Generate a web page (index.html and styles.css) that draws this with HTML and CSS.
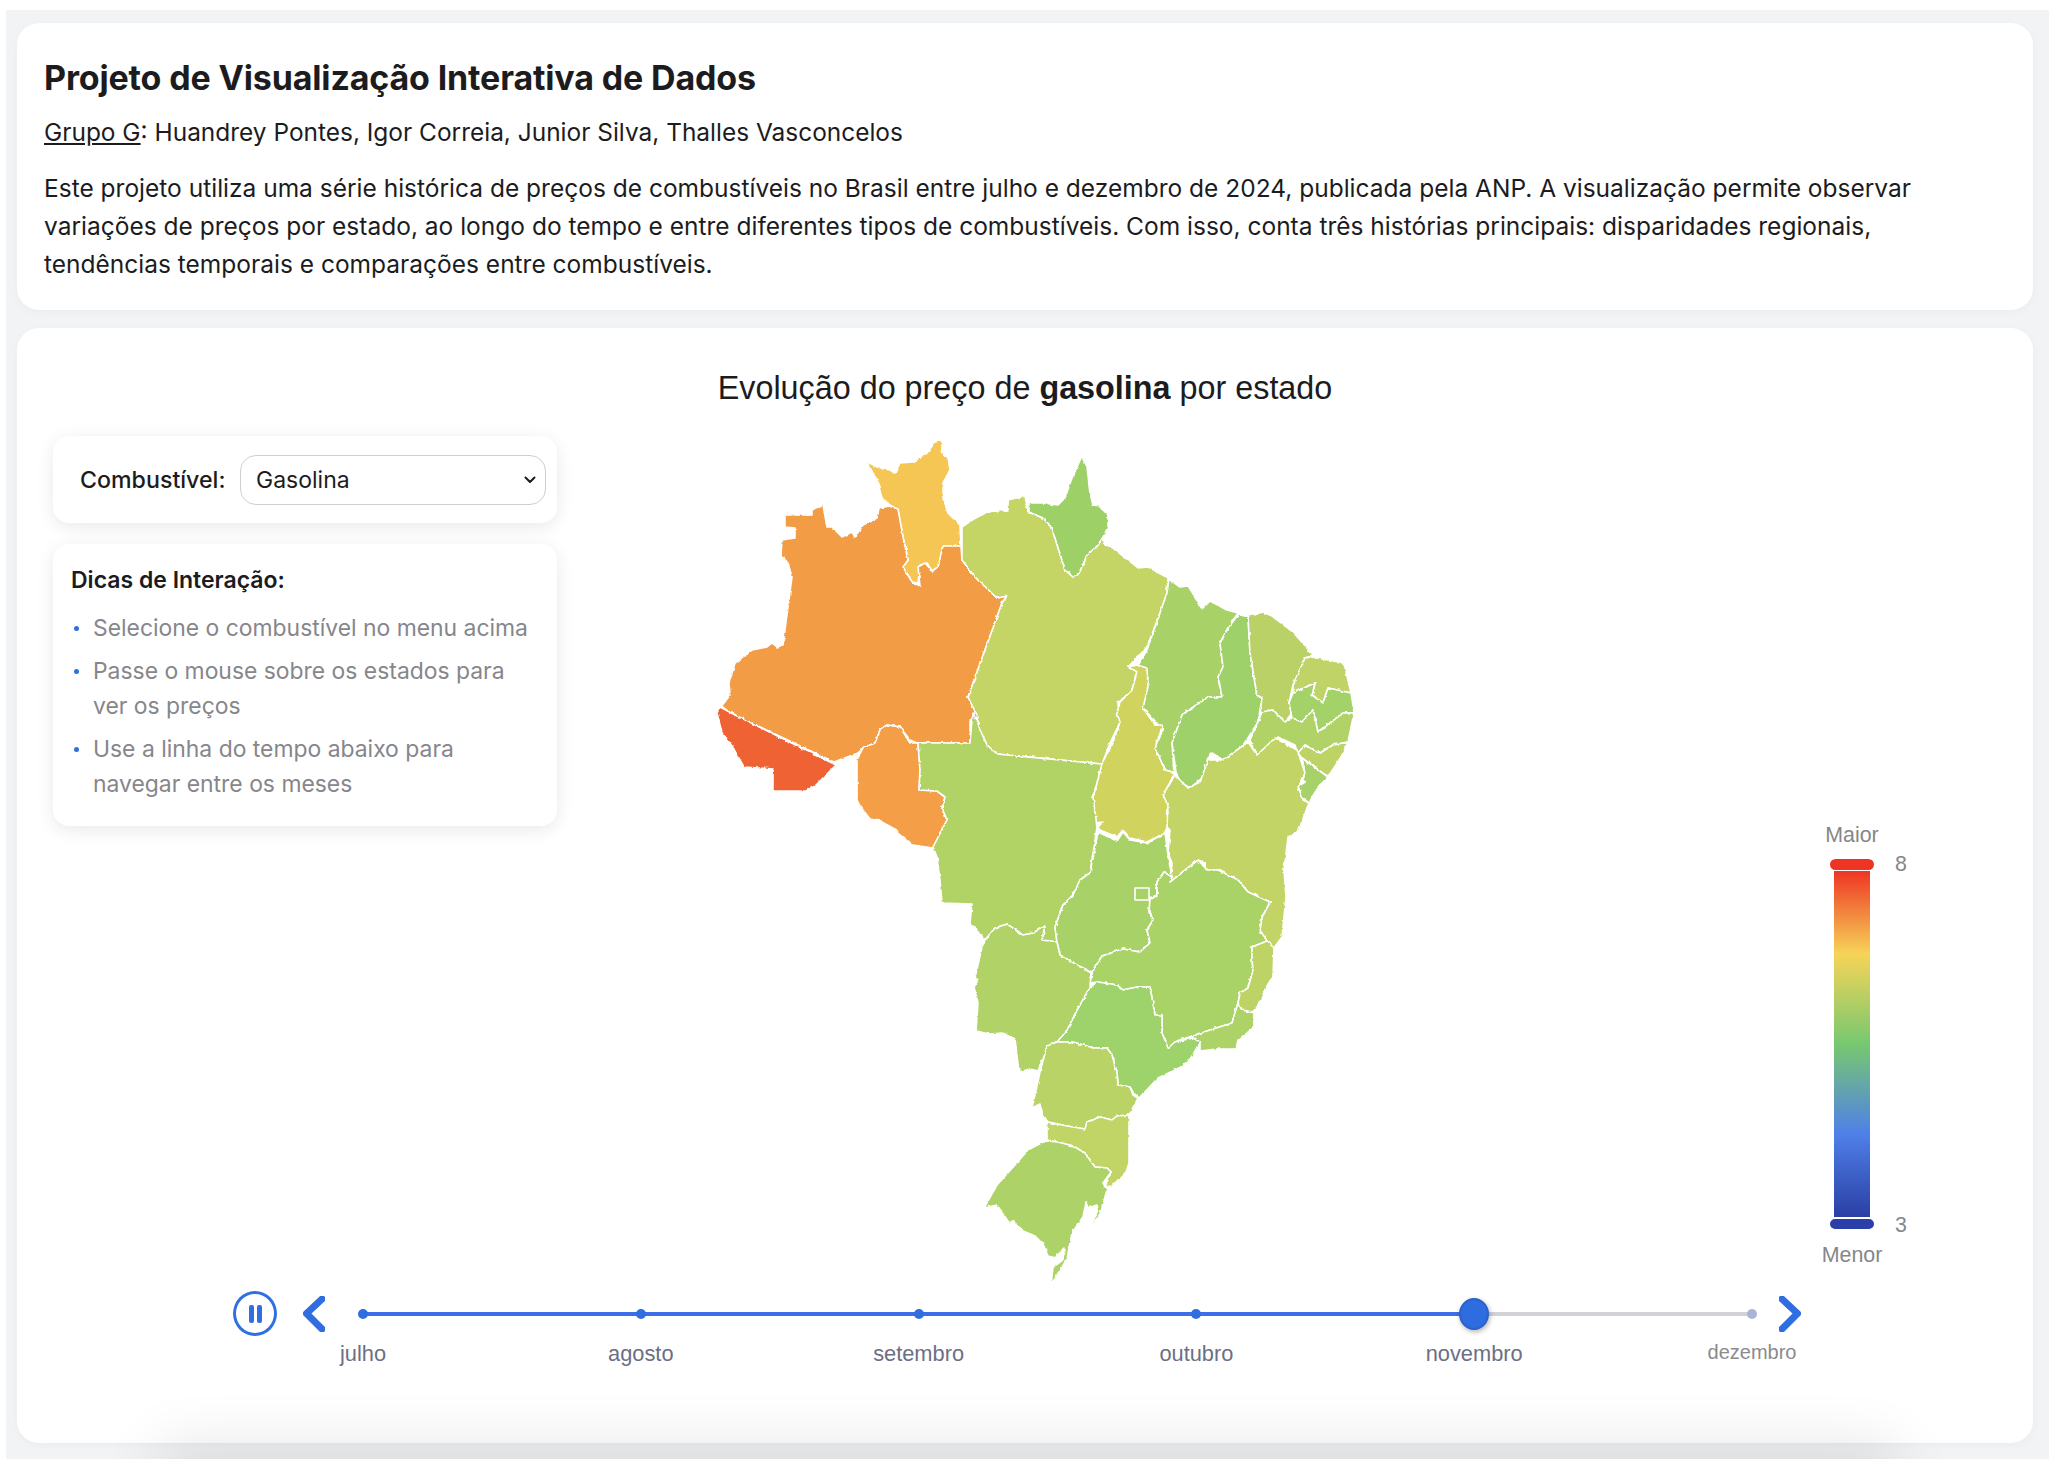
FILE: index.html
```html
<!DOCTYPE html>
<html lang="pt-BR">
<head>
<meta charset="utf-8">
<title>Projeto de Visualização Interativa de Dados</title>
<link rel="stylesheet" href="styles.css">
</head>
<body>
<main class="page">
  <header class="panel intro">
    <h1 class="intro-title">Projeto de Visualização Interativa de Dados</h1>
    <p class="intro-group"><u>Grupo G</u>: Huandrey Pontes, Igor Correia, Junior Silva, Thalles Vasconcelos</p>
    <p class="intro-text">Este projeto utiliza uma série histórica de preços de combustíveis no Brasil entre julho e dezembro de 2024, publicada pela ANP. A visualização permite observar variações de preços por estado, ao longo do tempo e entre diferentes tipos de combustíveis. Com isso, conta três histórias principais: disparidades regionais, tendências temporais e comparações entre combustíveis.</p>
  </header>

  <section class="panel viz">
    <h2 class="viz-title">Evolução do preço de <b>gasolina</b> por estado</h2>

    <div class="viz-row">
      <aside class="sidebar">
        <div class="card fuel-card">
          <label class="fuel-label" for="fuel">Combustível:</label>
          <div class="select-wrap">
            <select id="fuel" class="fuel-select"><option>Gasolina</option><option>Etanol</option><option>Diesel</option></select>
            <svg class="select-arrow" viewBox="0 0 12 8" width="12" height="8"><path d="M1.5 1.5 6 6l4.5-4.5"/></svg>
          </div>
        </div>
        <div class="card tips">
          <h3 class="tips-title">Dicas de Interação:</h3>
          <ul class="tips-list">
            <li>Selecione o combustível no menu acima</li>
            <li>Passe o mouse sobre os estados para ver os preços</li>
            <li>Use a linha do tempo abaixo para navegar entre os meses</li>
          </ul>
        </div>
      </aside>

      <svg class="map" viewBox="710 430 660 860" width="660" height="860">
        <defs>
          <filter id="rough" filterUnits="userSpaceOnUse" x="700" y="420" width="680" height="880" color-interpolation-filters="sRGB">
            <feTurbulence type="fractalNoise" baseFrequency="0.22" numOctaves="2" seed="4" result="n"/>
            <feDisplacementMap in="SourceGraphic" in2="n" scale="3" xChannelSelector="R" yChannelSelector="G"/>
          </filter>
        </defs>
        <g class="states">
          <polygon class="uf-rr" points="866,461 877,467 890,470 895,473 900,463 913,462 927,453 935,442 942,440 942,453 948,458 950,470 943,483 943,498 948,513 960,525 961,546 943,546 938,567 932,571 927,563 920,565 918,583 912,582 903,567 908,560 903,537 898,510 890,505 882,498 877,480"/>
          <polygon class="uf-am" points="889,506 898,509 903,537 908,560 903,567 912,582 920,586 918,567 925,563 932,571 938,567 943,546 961,546 962,560 975,577 997,598 1007,596 1002,603 968,697 978,717 970,720 970,743 917,743 910,740 900,727 887,725 880,730 875,743 863,748 858,753 834,762 737,716 721,707 730,695 729,683 735,663 752,650 767,647 772,643 777,647 783,645 792,577 788,563 781,555 782,540 795,538 795,528 785,527 785,515 812,515 812,510 823,505 827,527 832,527 842,537 852,532 855,537 863,525 877,518 879,508"/>
          <polygon class="uf-ac" points="717,713 720,707 737,716 836,765 815,786 806,791 773,791 773,769 744,767 732,746 722,733"/>
          <polygon class="uf-ro" points="918,743 920,770 919,790 937,791 945,797 942,808 947,820 933,848 913,845 893,828 880,821 870,819 860,806 857,800 857,760 863,748 875,743 880,730 887,725 900,727 910,743"/>
          <polygon class="uf-pa" points="962,527 972,520 987,512 1008,510 1008,500 1025,496 1028,512 1043,518 1050,525 1055,538 1065,570 1073,577 1079,573 1087,555 1098,545 1103,537 1105,545 1113,548 1132,563 1138,568 1148,567 1168,578 1167,593 1160,613 1147,647 1128,667 1137,672 1132,690 1118,703 1120,722 1110,743 1102,764 997,754 987,745 980,730 977,720 978,717 968,697 1002,603 1007,596 997,598 975,577 962,560"/>
          <polygon class="uf-ap" points="1029,503 1043,503 1058,505 1065,498 1072,478 1082,456 1087,467 1090,493 1093,505 1099,506 1108,515 1108,527 1103,537 1098,545 1087,555 1079,573 1073,577 1065,570 1055,538 1050,525 1043,518 1029,512"/>
          <polygon class="uf-ma" points="1169,579 1180,587 1188,586 1192,592 1197,601 1202,609 1210,601 1227,610 1238,613 1228,628 1220,643 1223,667 1218,677 1222,697 1208,697 1182,715 1172,743 1174,772 1165,770 1155,748 1163,730 1157,723 1143,708 1148,677 1137,667 1147,650 1160,613 1167,593"/>
          <polygon class="uf-pi" points="1248,617 1250,653 1257,695 1262,698 1258,722 1248,738 1238,752 1223,760 1212,753 1207,758 1208,773 1190,788 1180,782 1176,772 1172,743 1182,715 1208,697 1222,697 1218,677 1223,667 1220,643 1228,628 1239,614"/>
          <polygon class="uf-ce" points="1248,616 1263,612 1272,616 1293,632 1313,655 1305,658 1293,685 1289,703 1292,713 1285,722 1273,710 1260,713 1262,698 1257,695 1250,653"/>
          <polygon class="uf-rn" points="1312,657 1344,663 1351,693 1328,688 1323,703 1312,695 1315,683 1293,693 1293,685 1305,658"/>
          <polygon class="uf-pb" points="1293,693 1315,683 1312,695 1323,703 1328,688 1351,693 1354,713 1343,713 1318,732 1313,710 1302,722 1292,718 1289,703"/>
          <polygon class="uf-pe" points="1262,712 1273,710 1285,722 1292,718 1302,722 1313,710 1318,732 1343,713 1354,713 1348,742 1333,745 1320,753 1305,745 1298,753 1295,745 1278,737 1263,752 1257,757 1250,740 1258,722"/>
          <polygon class="uf-al" points="1298,753 1305,745 1320,753 1333,745 1348,742 1341,757 1328,777 1302,758"/>
          <polygon class="uf-se" points="1302,758 1328,777 1318,787 1309,803 1302,797 1298,786 1304,783 1304,767"/>
          <polygon class="uf-ba" points="1175,775 1188,788 1200,782 1208,760 1223,760 1248,742 1257,755 1275,738 1297,750 1300,758 1305,773 1298,787 1303,800 1309,803 1298,832 1288,837 1284,870 1286,897 1282,937 1274,948 1258,940 1262,917 1270,902 1248,892 1238,880 1218,870 1207,870 1205,862 1198,860 1170,882 1172,863 1168,853 1170,830 1167,827 1165,800 1162,797"/>
          <polygon class="uf-to" points="1128,667 1137,665 1147,668 1148,687 1143,708 1155,725 1163,725 1155,748 1165,770 1175,773 1163,795 1168,805 1167,827 1165,833 1147,842 1130,838 1123,830 1117,837 1100,830 1098,827 1103,822 1095,823 1093,797 1102,763 1113,743 1120,722 1117,713 1120,702 1132,690 1137,672"/>
          <polygon class="uf-mt" points="918,743 970,743 972,720 973,713 977,720 980,730 987,745 997,754 1102,764 1093,797 1097,827 1090,873 1080,880 1073,895 1063,905 1055,927 1057,942 1042,940 1045,926 1033,933 1023,935 1007,924 995,928 985,940 977,930 970,923 972,904 942,903 940,880 937,857 933,847 947,820 942,808 945,797 937,791 919,790 920,770"/>
          <polygon class="uf-go" points="1098,832 1117,841 1123,832 1130,840 1147,843 1165,833 1168,855 1172,877 1164,872 1157,882 1157,895 1150,898 1149,912 1153,920 1147,930 1150,943 1140,952 1123,949 1102,956 1092,972 1077,965 1060,955 1057,942 1055,927 1063,905 1073,895 1080,880 1090,873"/>
          <polygon class="uf-mg" points="1170,882 1198,860 1207,870 1218,870 1238,880 1248,892 1270,902 1262,917 1260,930 1267,941 1252,947 1252,958 1253,970 1248,988 1240,993 1238,1003 1232,1023 1210,1030 1175,1042 1168,1048 1162,1033 1162,1015 1155,1015 1150,987 1137,987 1123,990 1117,985 1097,982 1090,983 1092,972 1102,956 1123,949 1140,952 1150,943 1147,930 1153,920 1149,912 1150,900 1157,895 1157,882 1164,872 1172,877"/>
          <polygon class="uf-es" points="1267,941 1274,948 1273,977 1266,987 1261,1000 1254,1012 1242,1010 1238,1003 1240,993 1248,988 1253,970 1252,958 1252,947"/>
          <polygon class="uf-rj" points="1238,1003 1242,1010 1254,1013 1253,1028 1238,1040 1236,1049 1217,1049 1200,1051 1200,1042 1193,1038 1175,1042 1210,1030 1232,1023"/>
          <polygon class="uf-sp" points="1097,982 1117,985 1123,990 1137,987 1150,987 1155,1015 1162,1015 1162,1033 1168,1048 1175,1042 1193,1038 1200,1042 1191,1058 1181,1067 1158,1078 1139,1098 1133,1092 1130,1087 1118,1085 1117,1073 1112,1055 1107,1048 1093,1048 1073,1042 1057,1042 1067,1030 1077,1010 1090,987"/>
          <polygon class="uf-ms" points="985,940 995,928 1007,924 1023,935 1033,933 1045,926 1042,940 1057,942 1060,955 1077,965 1091,973 1090,987 1077,1010 1067,1030 1057,1042 1047,1048 1038,1071 1030,1069 1019,1072 1015,1039 1002,1033 990,1034 976,1031 978,1003 974,987 978,980 975,978 982,947"/>
          <polygon class="uf-pr" points="1047,1046 1057,1042 1073,1042 1093,1048 1107,1048 1112,1055 1117,1073 1118,1085 1130,1087 1133,1095 1138,1098 1129,1115 1117,1116 1112,1120 1100,1117 1087,1122 1085,1129 1067,1126 1048,1122 1043,1115 1040,1104 1032,1108 1040,1072"/>
          <polygon class="uf-sc" points="1047,1122 1067,1126 1085,1129 1087,1122 1100,1117 1112,1120 1117,1116 1129,1115 1129,1163 1126,1172 1112,1186 1105,1187 1111,1172 1107,1168 1095,1167 1085,1153 1073,1146 1058,1142 1047,1140"/>
          <polygon class="uf-rs" points="1045,1141 1058,1142 1073,1146 1085,1153 1095,1167 1107,1168 1111,1172 1103,1183 1107,1190 1100,1214 1088,1233 1098,1210 1097,1205 1088,1208 1086,1202 1083,1217 1072,1233 1070,1243 1067,1259 1051,1285 1053,1267 1063,1260 1064,1248 1055,1258 1048,1256 1043,1244 1035,1236 1023,1231 1013,1221 1010,1224 997,1205 984,1208 997,1185 1015,1165 1028,1150"/>
        </g>
        <rect class="uf-df" x="1135" y="888" width="14" height="12"/>
      </svg>

      <div class="legend">
        <span class="legend-title">Maior</span><span></span>
        <span class="legend-cap legend-cap-high"></span><span class="legend-value">8</span>
        <span class="legend-bar"></span><span></span>
        <span class="legend-cap legend-cap-low"></span><span class="legend-value legend-value-low">3</span>
        <span class="legend-title legend-title-low">Menor</span><span></span>
      </div>
    </div>

    <div class="timeline">
      <button class="play" type="button" aria-label="Pausar"><span class="play-bar"></span><span class="play-bar"></span></button>
      <svg class="chev chev-prev" viewBox="0 0 22 36" width="22" height="36"><path d="M19 3 3.500 17.500 19 33"/></svg>
      <div class="track">
        <div class="track-fill" style="width: 80%"></div>
        <div class="tick"><span class="dot"></span><span class="tick-label">julho</span></div>
        <div class="tick"><span class="dot"></span><span class="tick-label">agosto</span></div>
        <div class="tick"><span class="dot"></span><span class="tick-label">setembro</span></div>
        <div class="tick"><span class="dot"></span><span class="tick-label">outubro</span></div>
        <div class="tick"><span class="dot dot-current"></span><span class="tick-label">novembro</span></div>
        <div class="tick tick-next"><span class="dot dot-next"></span><span class="tick-label">dezembro</span></div>
      </div>
      <svg class="chev chev-next" viewBox="0 0 22 36" width="22" height="36"><path d="M3 3 18.500 17.500 3 33"/></svg>
    </div>
  </section>
</main>
</body>
</html>
```
FILE: styles.css
```css
* { box-sizing: border-box; }
html, body { margin: 0; padding: 0; background: #fff; }
body { font-family: Inter, "Noto Sans", sans-serif; color: #1c1c1e; }

.page {
  position: relative;
  overflow: hidden;
  height: 1449px;
  margin: 10px 5px 7px 6px;
  padding: 13px 16px 16px 11px;
  background: #f2f3f5;
  display: flex;
  flex-direction: column;
  gap: 18px;
}
.page::after {
  content: "";
  position: absolute;
  left: 165px;
  right: 165px;
  top: 100%;
  height: 60px;
  box-shadow: 0 0 60px 12px rgba(0, 0, 0, .11);
  pointer-events: none;
}
.panel { background: #fff; border-radius: 22px; box-shadow: 0 2px 10px rgba(0, 0, 0, .03); }

.intro { padding: 35px 27px 27px; }
.intro-title { margin: 0 0 16px; font-size: 34px; line-height: 40px; font-weight: 700; letter-spacing: -.15px; }
.intro-group { margin: -1px 0 18px; font-size: 24.45px; line-height: 38px; }
.intro-text { max-width: 1900px; margin: 0; font-size: 24.5px; line-height: 38px; }

.viz { flex: 1; padding: 40px 0 0; }
.viz-title { margin: 0 0 22px; text-align: center; font: 400 32.35px/40px "Liberation Sans", Arial, sans-serif; }
.viz-title b { font-weight: 700; }

.viz-row { display: flex; align-items: flex-start; height: 860px; padding-left: 36px; }
.sidebar { width: 504px; margin-top: 6px; display: flex; flex-direction: column; gap: 21px; flex: none; }
.card { background: #fff; border-radius: 16px; box-shadow: 0 4px 18px rgba(0, 0, 0, .09); }

.fuel-card { height: 87px; display: flex; align-items: center; padding: 0 11px 0 27px; gap: 14.5px; }
.fuel-label { font-size: 23.2px; font-weight: 500; white-space: nowrap; }
.select-wrap { position: relative; flex: 1; }
.fuel-select {
  appearance: none;
  -webkit-appearance: none;
  display: block;
  width: 100%;
  height: 50px;
  padding: 0 15px;
  border: 1.5px solid #cfcfd2;
  border-radius: 16px;
  background: #fff;
  font: 400 23px Inter, sans-serif;
  color: #1c1c1e;
}
.select-arrow { position: absolute; right: 10px; top: 21px; pointer-events: none; }
.select-arrow path { fill: none; stroke: #1c1c1e; stroke-width: 2; stroke-linecap: round; stroke-linejoin: round; }

.tips { height: 282px; padding: 21px 19px 0 18px; }
.tips-title { margin: 0 0 16px; font-size: 23px; line-height: 30px; font-weight: 600; }
.tips-list { margin: 0; padding: 0; list-style: none; }
.tips-list li { position: relative; padding-left: 22px; margin-bottom: 8px; font-size: 22.9px; line-height: 35px; color: #86868b; }
.tips-list li::before {
  content: "";
  position: absolute;
  left: 3px;
  top: 15px;
  width: 5px;
  height: 5px;
  border-radius: 50%;
  background: #2f6fe0;
}

.map { flex: none; margin-left: 153px; display: block; }
.states { filter: url(#rough); }
.states polygon, .uf-df { stroke: #fff; stroke-width: 1.6; stroke-linejoin: round; }
.uf-ac { fill: #ef6233; }
.uf-am { fill: #f29c46; }
.uf-rr { fill: #f6c654; }
.uf-ap { fill: #9dd168; }
.uf-pa { fill: #c4d465; }
.uf-ma { fill: #a8d267; }
.uf-pi { fill: #9fd16a; }
.uf-ce { fill: #b9d166; }
.uf-rn { fill: #bfd366; }
.uf-pb { fill: #a2d268; }
.uf-pe { fill: #b1d267; }
.uf-al { fill: #bdd366; }
.uf-se { fill: #a7d26a; }
.uf-ba { fill: #c1d465; }
.uf-to { fill: #d0d45f; }
.uf-ro { fill: #f49f47; }
.uf-mt { fill: #b1d265; }
.uf-go { fill: #a8d267; }
.uf-df { fill: #a8d267; }
.uf-mg { fill: #a9d267; }
.uf-es { fill: #bed366; }
.uf-rj { fill: #add267; }
.uf-sp { fill: #9ed26a; }
.uf-ms { fill: #b1d267; }
.uf-pr { fill: #b9d366; }
.uf-sc { fill: #c1d466; }
.uf-rs { fill: #add267; }

.legend {
  flex: none;
  margin-left: auto;
  margin-right: 109px;
  margin-top: 393px;
  display: grid;
  grid-template-columns: 84px 30px;
  justify-items: center;
  font: 400 21.4px/24px "Liberation Sans", Arial, sans-serif;
  color: #86868b;
}
.legend-title { margin-bottom: 12px; }
.legend-title-low { margin: 12px 0 0; }
.legend-cap { width: 44px; height: 11px; border-radius: 6px; }
.legend-cap-high { background: #ee3524; }
.legend-cap-low { background: #2a3fa8; margin-top: 2px; height: 10px; }
.legend-value { justify-self: start; padding-left: 1px; line-height: 11px; }
.legend-value-low { margin-top: 3px; }
.legend-bar {
  width: 36px;
  height: 346px;
  margin-top: 1px;
  background: linear-gradient(to bottom, #ee3524 0%, #f6d458 24%, #77c870 50%, #4f80e8 76%, #2a3fa5 100%);
}

.timeline { display: flex; align-items: flex-start; margin: 1px 0 0 216px; }
.play {
  flex: none;
  width: 44px;
  height: 45px;
  padding: 0;
  border: 3px solid #2f6fe0;
  border-radius: 50%;
  background: #fff;
  display: flex;
  align-items: center;
  justify-content: center;
  gap: 3px;
}
.play-bar { width: 5px; height: 18px; border-radius: 2px; background: #2f6fe0; }
.chev { flex: none; margin-top: 5px; }
.chev path { fill: none; stroke: #2f6de0; stroke-width: 7; stroke-linecap: round; stroke-linejoin: round; }
.chev-prev { margin-left: 26px; }
.chev-next { margin-left: 27px; }

.track {
  position: relative;
  flex: none;
  width: 1389px;
  height: 70px;
  margin: 8px 0 0 38px;
  display: flex;
  justify-content: space-between;
}
.track::before, .track-fill {
  content: "";
  position: absolute;
  left: 0;
  top: 13px;
  height: 4px;
}
.track::before { width: 100%; background: #d1d1d6; }
.track-fill { background: #3c6ee8; }
.tick { position: relative; width: 0; display: flex; flex-direction: column; align-items: center; }
.dot {
  flex: none;
  width: 10px;
  height: 10px;
  margin: 10px 0;
  border-radius: 50%;
  background: #2f6de0;
}
.dot-current {
  width: 30px;
  height: 32px;
  margin: -1px 0;
  background: #2d6de0;
  border: 2px solid #2a62c8;
  box-shadow: 1px 2px 5px rgba(0, 0, 0, .3);
}
.dot-next { background: #aab4d8; }
.tick-label {
  margin-top: 12px;
  font: 400 21.8px/26px "Liberation Sans", Arial, sans-serif;
  color: #6b6f85;
  white-space: nowrap;
}
.tick-next .tick-label { margin-top: 10px; font-size: 20px; color: #8a8a8f; }
```
